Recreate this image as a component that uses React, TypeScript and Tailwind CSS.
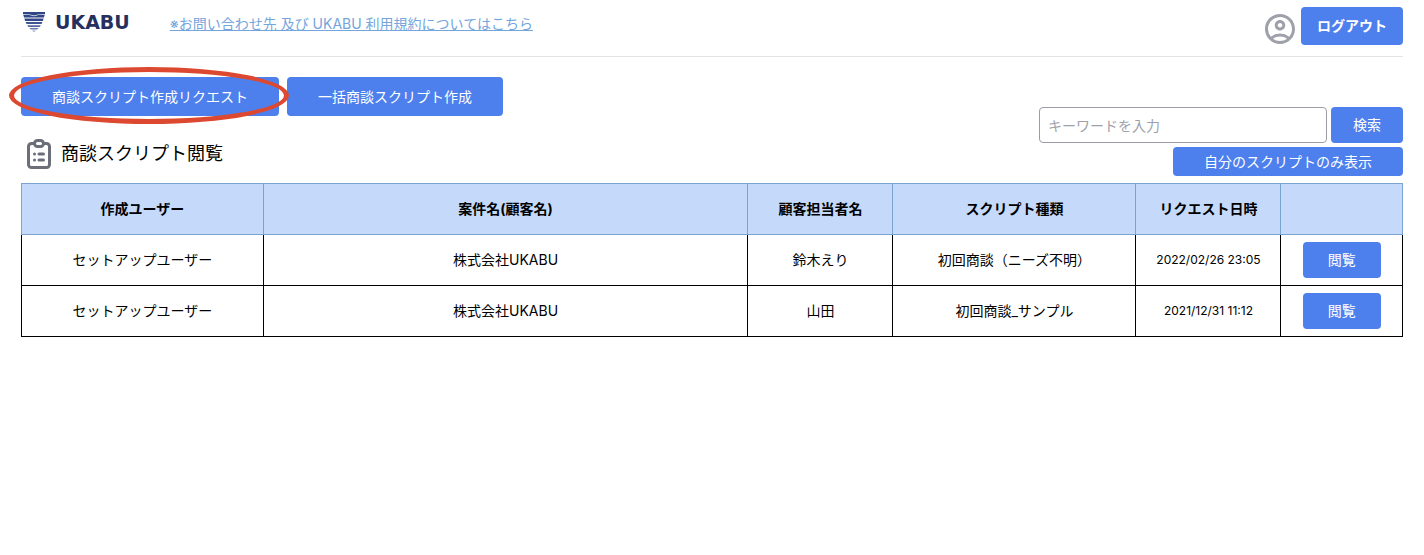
import { HiOutlineClipboardList } from "react-icons/hi";
import { MdOutlineAccountCircle } from "react-icons/md";

const columns = [
  { label: "作成ユーザー", width: "w-[17.5%]" },
  { label: "案件名(顧客名)", width: "w-[35.1%]" },
  { label: "顧客担当者名", width: "w-[10.5%]" },
  { label: "スクリプト種類", width: "w-[17.6%]" },
  { label: "リクエスト日時", width: "w-[10.5%]" },
  { label: "", width: "w-[8.8%]" },
];

const scripts = [
  {
    id: 1,
    user: "セットアップユーザー",
    customer: "株式会社UKABU",
    contact: "鈴木えり",
    type: "初回商談（ニーズ不明）",
    requestedAt: "2022/02/26 23:05",
  },
  {
    id: 2,
    user: "セットアップユーザー",
    customer: "株式会社UKABU",
    contact: "山田",
    type: "初回商談_サンプル",
    requestedAt: "2021/12/31 11:12",
  },
];

function Button({ className, children }: { className: string; children: React.ReactNode }) {
  return (
    <button type="button" className={`rounded bg-[#4d80ed] text-white hover:bg-blue-600 ${className}`}>
      {children}
    </button>
  );
}

function Logo() {
  return (
    <a href="/" className="flex items-center gap-2.5 text-[#26305e]">
      <svg viewBox="0 0 24 22" className="h-[22px] w-6" aria-hidden="true">
        <path fill="#2f4585" d="M2 1h22v2.200l-7 .3-4 1.100-4-1.100-7-.3z" />
        <path fill="#2f4585" d="M2.300 4h6.200l4.500 1.300L17.500 4h6.200l-.8 2.600H3.100z" />
        <path fill="#31478a" d="M3.400 7.600h19.200l-.7 2.300H4.100z" />
        <path fill="#3f5594" d="M4.600 11h16.800l-.9 2.100h-15z" />
        <path fill="#5567a0" d="M6.200 14.200h13.600l-1.200 1.700H7.400z" />
        <path fill="#6b7bac" d="M8.300 17h9.400l-1.600 1.400H9.900z" />
        <path fill="#97a2c4" d="M10.800 19.400h4.400L13 21z" />
      </svg>
      <span className="font-['DejaVu_Sans'] text-[19px] leading-6 font-bold">UKABU</span>
    </a>
  );
}

export default function App() {
  return (
    <div className="px-[21px] font-['Inter','Noto_Sans_CJK_JP',sans-serif] text-sm text-black" lang="ja">
      <header className="flex items-start justify-between border-b border-[#e3e3e3] pt-[7px] pb-[11px]">
        <div className="flex items-center gap-10 pt-[3px]">
          <Logo />
          <a href="/contact" className="pt-1 text-[#74a5dc] underline">
            ※お問い合わせ先 及び UKABU 利用規約についてはこちら
          </a>
        </div>
        <div className="flex items-end gap-1">
          <a href="/account" aria-label="アカウント" className="-mx-px -mb-0.5 text-[#9ea1aa]">
            <MdOutlineAccountCircle className="size-9" />
          </a>
          <Button className="h-[38px] px-4 font-bold">ログアウト</Button>
        </div>
      </header>

      <main className="pt-5">
        <div className="flex items-start justify-between">
          <div>
            <div className="flex gap-2">
              <div className="relative">
                <Button className="h-[39px] px-[31px]">商談スクリプト作成リクエスト</Button>
                <div className="pointer-events-none absolute -top-2.5 -right-2.5 -bottom-2 -left-3 rounded-[50%] border-[5px] border-[#dc4930]" />
              </div>
              <Button className="h-[39px] px-[31px]">一括商談スクリプト作成</Button>
            </div>
            <h1 className="mt-5 flex items-center gap-1 text-lg">
              <HiOutlineClipboardList className="size-9 text-[#6c6f7a]" />
              商談スクリプト閲覧
            </h1>
          </div>
          <div className="flex flex-col items-end gap-1 pt-[30px]">
            <form className="flex gap-1">
              <input
                type="text"
                aria-label="キーワード"
                placeholder="キーワードを入力"
                className="h-9 w-72 rounded border border-[#9c9ea5] px-2 placeholder:text-[#9ea1aa]"
              />
              <Button className="h-9 px-[22px]">検索</Button>
            </form>
            <Button className="h-[29px] px-[31px]">自分のスクリプトのみ表示</Button>
          </div>
        </div>

        <table className="mt-[7px] w-full table-fixed border-collapse text-center">
          <thead>
            <tr className="h-[51px] bg-[#c5dafb]">
              {columns.map((col) => (
                <th key={col.label} className={`border border-[#7aa3d2] font-bold ${col.width}`}>
                  {col.label}
                </th>
              ))}
            </tr>
          </thead>
          <tbody>
            {scripts.map((row) => (
              <tr key={row.id} className="h-[51px]">
                <td className="border border-t-0 border-black">{row.user}</td>
                <td className="border border-t-0 border-black">{row.customer}</td>
                <td className="border border-t-0 border-black">{row.contact}</td>
                <td className="border border-t-0 border-black">{row.type}</td>
                <td className="border border-t-0 border-black text-xs">{row.requestedAt}</td>
                <td className="border border-t-0 border-black">
                  <Button className="h-9 px-[25px]">閲覧</Button>
                </td>
              </tr>
            ))}
          </tbody>
        </table>
      </main>
    </div>
  );
}
